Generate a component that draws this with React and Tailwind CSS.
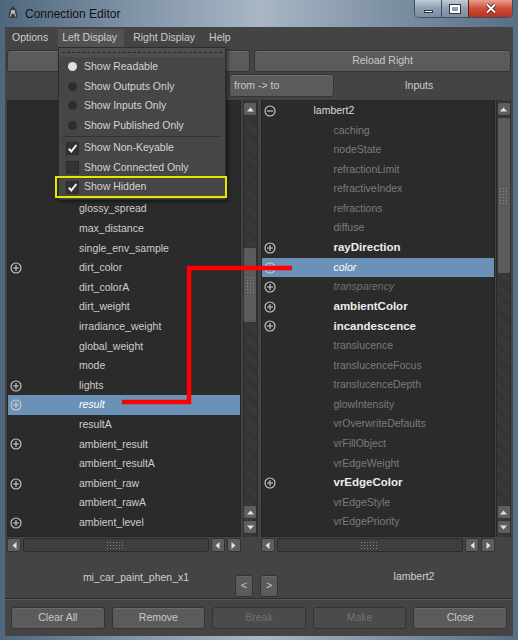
import React from 'react';

// first five rows sit behind the open Left Display menu
const LEFT_ROWS = [
  { name: '' },
  { name: '' },
  { name: '' },
  { name: '' },
  { name: '' },
  { name: 'glossy_spread' },
  { name: 'max_distance' },
  { name: 'single_env_sample' },
  { name: 'dirt_color', icon: 'plus' },
  { name: 'dirt_colorA' },
  { name: 'dirt_weight' },
  { name: 'irradiance_weight' },
  { name: 'global_weight' },
  { name: 'mode' },
  { name: 'lights', icon: 'plus' },
  { name: 'result', icon: 'plus', sel: true },
  { name: 'resultA' },
  { name: 'ambient_result', icon: 'plus' },
  { name: 'ambient_resultA' },
  { name: 'ambient_raw', icon: 'plus' },
  { name: 'ambient_rawA' },
  { name: 'ambient_level', icon: 'plus' },
];

const RIGHT_ROWS = [
  { name: 'lambert2', icon: 'minus', kind: 'parent' },
  { name: 'caching', kind: 'dim' },
  { name: 'nodeState', kind: 'dim' },
  { name: 'refractionLimit', kind: 'dim' },
  { name: 'refractiveIndex', kind: 'dim' },
  { name: 'refractions', kind: 'dim' },
  { name: 'diffuse', kind: 'dim' },
  { name: 'rayDirection', icon: 'plus', kind: 'bold' },
  { name: 'color', icon: 'plus', sel: true },
  { name: 'transparency', icon: 'plus', kind: 'dimItalic' },
  { name: 'ambientColor', icon: 'plus', kind: 'bold' },
  { name: 'incandescence', icon: 'plus', kind: 'bold' },
  { name: 'translucence', kind: 'dim' },
  { name: 'translucenceFocus', kind: 'dim' },
  { name: 'translucenceDepth', kind: 'dim' },
  { name: 'glowIntensity', kind: 'dim' },
  { name: 'vrOverwriteDefaults', kind: 'dim' },
  { name: 'vrFillObject', kind: 'dim' },
  { name: 'vrEdgeWeight', kind: 'dim' },
  { name: 'vrEdgeColor', icon: 'plus', kind: 'bold' },
  { name: 'vrEdgeStyle', kind: 'dim' },
  { name: 'vrEdgePriority', kind: 'dim' },
];

const TEXT = {
  norm: 'text-[#cdcdcd]',
  dim: 'text-[#7b7b7b]',
  bold: 'font-bold text-[11.5px] text-[#ececec]',
  dimItalic: 'italic text-[#707070]',
  parent: 'text-[#dadada]',
  sel: 'italic text-white',
};

function CircleIcon({ minus }) {
  return (
    <svg width="12" height="12" viewBox="0 0 12 12">
      <circle cx="6" cy="6" r="5" fill="none" stroke="#d0d0d0" strokeWidth="1.1" />
      <path d={minus ? 'M3 6h6' : 'M3 6h6M6 3v6'} stroke="#d0d0d0" strokeWidth="1.1" />
    </svg>
  );
}

function Row({ r, side }) {
  const kind = r.sel ? 'sel' : r.kind || 'norm';
  let indent = 'ml-[55px]';
  if (side === 'right') indent = r.kind === 'parent' ? 'ml-[36px]' : 'ml-[56px]';
  return (
    <div className={`flex h-[19.6px] items-center whitespace-nowrap ${r.sel ? 'bg-[#6a91b8]' : ''}`}>
      <span className="flex w-[16px] justify-center">
        {r.icon && <CircleIcon minus={r.icon === 'minus'} />}
      </span>
      {r.name && <span className={`${indent} ${TEXT[kind]}`}>{r.name}</span>}
    </div>
  );
}

function Arrow({ dir }) {
  const d = {
    up: 'M1 6.5 L4.5 2.5 L8 6.5 Z',
    down: 'M1 2.5 L4.5 6.5 L8 2.5 Z',
    left: 'M6.5 1 L2.5 4.5 L6.5 8 Z',
    right: 'M2.5 1 L6.5 4.5 L2.5 8 Z',
  }[dir];
  return (
    <div className="flex h-[14px] w-[14px] shrink-0 items-center justify-center rounded-[2px] border border-[#333] bg-[#5e5e5e]">
      <svg width="9" height="9" viewBox="0 0 9 9">
        <path d={d} fill="#e2e2e2" />
      </svg>
    </div>
  );
}

function Grip({ w, h }) {
  return (
    <div
      className="bg-[radial-gradient(circle,#8a8a8a_0.7px,transparent_0.9px)] bg-[length:3px_3px]"
      style={{ width: w, height: h }}
    />
  );
}

function VScroll({ gapTop, thumb }) {
  return (
    <div className="flex h-[437px] w-[15px] flex-col items-center border-x border-[#2a2a2a] bg-[repeating-linear-gradient(45deg,#3b3b3b_0_1px,#323232_1px_2px)]">
      <div className="mt-[2px]">
        <Arrow dir="up" />
      </div>
      <div style={{ height: gapTop }} />
      <div
        className="flex w-[14px] items-center justify-center rounded-[2px] border border-[#333] bg-[#5b5b5b]"
        style={{ height: thumb }}
      >
        <Grip w={9} h={18} />
      </div>
      <div className="flex-1" />
      <Arrow dir="up" />
      <div className="h-[1px]" />
      <Arrow dir="down" />
      <div className="h-[3px]" />
    </div>
  );
}

function HScroll() {
  return (
    <div className="mt-[1px] flex h-[14px] gap-[2px]">
      <Arrow dir="left" />
      <div className="flex flex-1 items-center justify-center rounded-[2px] border border-[#2c2c2c] bg-[#3e3e3e]">
        <Grip w={19} h={8} />
      </div>
      <Arrow dir="left" />
      <Arrow dir="right" />
    </div>
  );
}

function Btn({ children, disabled, className = '' }) {
  return (
    <div
      className={`flex items-center justify-center rounded-[3px] border border-[#343434] ${
        disabled ? 'bg-[#4b4b4b] text-[#717171]' : 'bg-[#5b5b5b] text-[#c9c9c9] shadow-[inset_0_1px_0_#6a6a6a]'
      } ${className}`}
    >
      {children}
    </div>
  );
}

function Radio({ on }) {
  return <span className={`h-[9px] w-[9px] rounded-full ${on ? 'bg-[#e0e0e0]' : 'bg-[#2c2c2c]'}`} />;
}

function Check({ on }) {
  return (
    <span className="flex h-[13px] w-[13px] items-center justify-center border border-[#2b2b2b] bg-[#333]">
      {on && (
        <svg width="11" height="11" viewBox="0 0 11 11">
          <path d="M1.8 5.8 L4.3 8.4 L9.4 2" fill="none" stroke="#f2f2f2" strokeWidth="2" />
        </svg>
      )}
    </span>
  );
}

function MenuItem({ mark, children }) {
  return (
    <div className="flex h-[19.6px] items-center">
      <span className="flex w-[25px] justify-center pl-[2px]">{mark}</span>
      <span>{children}</span>
    </div>
  );
}

export default function App() {
  return (
    <div className="relative flex h-[640px] w-[518px] flex-col overflow-hidden bg-[linear-gradient(90deg,#4f667c,#7f93a7_25%,#a9b7c5_50%,#7e91a4_75%,#586e84)] font-['Liberation_Sans',Arial,sans-serif] text-[10.5px]">
      {/* Title bar */}
      <div className="flex h-[27px] shrink-0 items-start">
        <div className="ml-[7px] mt-[5px] flex h-[15px] w-[12px] items-center justify-center">
          <svg width="12" height="15" viewBox="0 0 12 15">
            <path d="M2 13 C1 8 3 3 6 1 C9 3 11 8 10 13 Z" fill="#3a3f45" />
            <path d="M3.5 11.5 L5 5 L6 9 L7 5 L8.5 11.5" fill="none" stroke="#c8ccd0" strokeWidth="1" />
          </svg>
        </div>
        <div className="ml-[6px] mt-[5px] text-[12px] text-[#111]">Connection Editor</div>
        <div className="flex-1" />
        <div className="mr-[5px] flex h-[18px] overflow-hidden rounded-b-[5px] border border-t-0 border-[#3e4f60]">
          <div className="flex w-[26px] items-center justify-center bg-[linear-gradient(#c1ccd7,#8d9fb1_50%,#7b8ea2)]">
            <div className="mt-[5px] h-[3px] w-[9px] border border-[#333] bg-white" />
          </div>
          <div className="flex w-[27px] items-center justify-center border-l border-[#3e4f60] bg-[linear-gradient(#c1ccd7,#8d9fb1_50%,#7b8ea2)]">
            <div className="h-[8px] w-[10px] border-2 border-white outline outline-1 outline-[#333]" />
          </div>
          <div className="flex w-[44px] items-center justify-center border-l border-[#5a2019] bg-[linear-gradient(#e8a090,#cf4d39_50%,#b5321f)]">
            <svg width="12" height="11" viewBox="0 0 12 11">
              <path d="M2 1.5 L10 9.5 M10 1.5 L2 9.5" stroke="#3b1510" strokeWidth="3.4" />
              <path d="M2 1.5 L10 9.5 M10 1.5 L2 9.5" stroke="#fff" strokeWidth="2" />
            </svg>
          </div>
        </div>
      </div>

      {/* Client area */}
      <div className="mx-[5px] mb-[4px] flex w-[508px] flex-1 flex-col bg-[#444] text-[#cdcdcd]">
        {/* Menu bar */}
        <div className="flex h-[21px] items-center">
          <span className="ml-[3px] px-[4px]">Options</span>
          <span className="ml-[6px] flex h-[18px] w-[66px] items-center bg-[#525252] pl-[4px]">Left Display</span>
          <span className="ml-[5px] px-[4px]">Right Display</span>
          <span className="ml-[6px] px-[4px]">Help</span>
        </div>

        {/* Reload buttons (left one is under the menu) */}
        <div className="mt-[2px] flex h-[22px] gap-[4px] px-[2px]">
          <Btn className="w-[243px]" />
          <Btn className="flex-1 text-[#bdbdbd]">Reload Right</Btn>
        </div>

        {/* Direction row */}
        <div className="mt-[2px] flex h-[23px]">
          <div className="w-[224px]" />
          <Btn className="w-[105px] !justify-start pl-[4px]">from -&gt; to</Btn>
          <div className="flex flex-1 items-center justify-center pr-[9px]">Inputs</div>
        </div>

        {/* Lists */}
        <div className="mt-[3px] flex h-[452px] px-[2px]">
          <div className="flex w-[234px] flex-col">
            <div className="h-[437px] overflow-hidden border border-[#262626] bg-[#2b2b2b] pt-[0.5px]">
              {LEFT_ROWS.map((r, i) => (
                <Row key={i} r={r} side="left" />
              ))}
            </div>
            <HScroll />
          </div>
          <div className="ml-[2px]">
            <VScroll gapTop={131} thumb={76} />
          </div>
          <div className="ml-[3px] flex w-[235px] flex-col">
            <div className="h-[437px] overflow-hidden border border-[#262626] bg-[#2b2b2b]">
              {RIGHT_ROWS.map((r, i) => (
                <Row key={i} r={r} side="right" />
              ))}
            </div>
            <HScroll />
          </div>
          <div className="ml-[1px]">
            <VScroll gapTop={1} thumb={157} />
          </div>
        </div>

        {/* Node labels */}
        <div className="flex h-[46px]">
          <div className="w-[230px] pl-[32px] pt-[18px] text-center text-[#cfcfcf]">mi_car_paint_phen_x1</div>
          <Btn className="mt-[23px] h-[22px] w-[18px] text-[#aaa]">&lt;</Btn>
          <Btn className="ml-[7px] mt-[23px] h-[22px] w-[18px] text-[#aaa]">&gt;</Btn>
          <div className="flex-1 pl-[37px] pt-[17px] text-center text-[#cfcfcf]">lambert2</div>
        </div>
        <div className="h-[1px] bg-[#2c2c2c]" />
        <div className="h-[1px] bg-[#555]" />

        {/* Bottom buttons */}
        <div className="mt-[7px] flex h-[22px] gap-[7px] px-[6px]">
          <Btn className="flex-1">Clear All</Btn>
          <Btn className="flex-1">Remove</Btn>
          <Btn className="flex-1" disabled>Break</Btn>
          <Btn className="flex-1" disabled>Make</Btn>
          <Btn className="flex-1">Close</Btn>
        </div>
      </div>

      {/* Left Display dropdown */}
      <div className="absolute left-[58px] top-[47px] flex w-[168px] flex-col border border-[#2d2d2d] bg-[#464646] pb-[2px] text-[#d4d4d4] shadow-[2px_2px_3px_rgba(0,0,0,0.45)]">
        <div className="flex h-[9px] items-center bg-[#4f4f4f] px-[3px]">
          <div className="w-full border-t border-dashed border-[#262626]" />
        </div>
        <MenuItem mark={<Radio on />}>Show Readable</MenuItem>
        <MenuItem mark={<Radio />}>Show Outputs Only</MenuItem>
        <MenuItem mark={<Radio />}>Show Inputs Only</MenuItem>
        <MenuItem mark={<Radio />}>Show Published Only</MenuItem>
        <div className="mx-[4px] my-[1px] h-[1px] bg-[#333]" />
        <MenuItem mark={<Check on />}>Show Non-Keyable</MenuItem>
        <MenuItem mark={<Check />}>Show Connected Only</MenuItem>
        <MenuItem mark={<Check on />}>Show Hidden</MenuItem>
      </div>

      {/* Yellow highlight around "Show Hidden" */}
      <div className="pointer-events-none absolute left-[55px] top-[176px] h-[22px] w-[172px] border-2 border-[#e6e600]" />

      {/* Connection line */}
      <svg className="pointer-events-none absolute left-0 top-0" width="518" height="640">
        <polyline points="122,402 189,402 189,268 292,268" fill="none" stroke="#ff0000" strokeWidth="4.5" />
      </svg>
    </div>
  );
}
